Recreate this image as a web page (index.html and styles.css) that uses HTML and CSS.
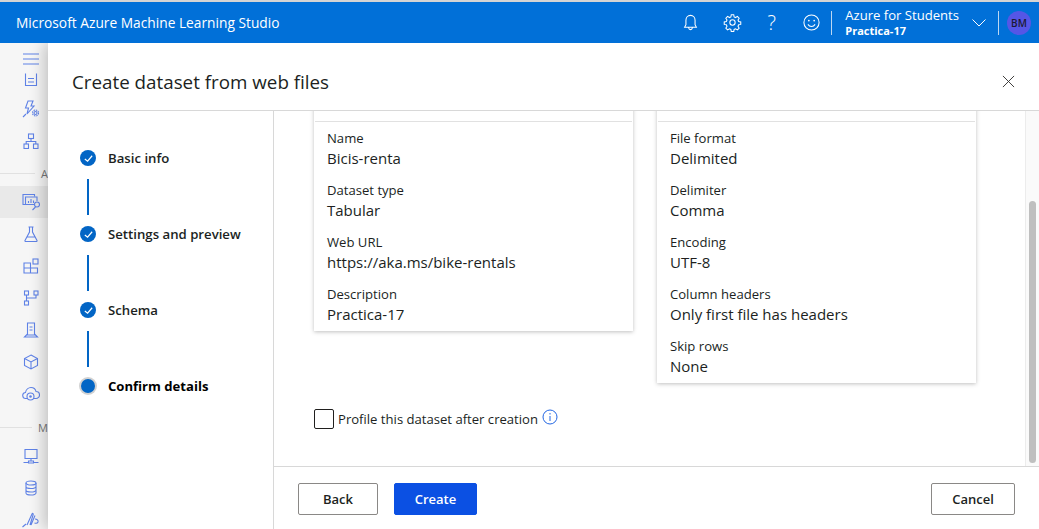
FILE: index.html
```html
<!DOCTYPE html>
<html lang="en">
<head>
    <meta charset="UTF-8">
    <title>Create dataset from web files</title>
    <link rel="stylesheet" href="styles.css">
</head>
<body>

<header class="topbar">
    <div class="brand">Microsoft Azure Machine Learning Studio</div>
    <div class="top-icons">
        <svg class="top-icon" viewBox="0 0 20 20"><path d="M10 2.500c-3 0-4.800 2.200-4.800 5v4.800L3.800 15h12.400l-1.400-2.700V7.500c0-2.800-1.800-5-4.800-5zM8 15.500c.2 1.300 1 2 2 2s1.800-.7 2-2"/></svg>
        <svg class="top-icon top-gear" viewBox="0 0 20 20"><circle cx="10" cy="10" r="2.800"/><path d="M8.700 1.800h2.600l.4 2.300 1.500.7 2-1.200 1.800 1.900-1.200 1.900.7 1.600 2.200.4v2.600l-2.200.4-.7 1.600 1.200 1.900-1.800 1.900-2-1.200-1.500.7-.4 2.300H8.700l-.4-2.300-1.500-.7-2 1.200-1.800-1.900 1.200-1.900-.7-1.600-2.200-.4V9.400l2.200-.4.7-1.600-1.200-1.900 1.800-1.900 2 1.200 1.500-.7z"/></svg>
        <span class="top-help">?</span>
        <svg class="top-icon" viewBox="0 0 20 20"><circle cx="10" cy="10" r="8"/><circle class="solid" cx="7.200" cy="8" r=".9"/><circle class="solid" cx="12.800" cy="8" r=".9"/><path d="M6.200 12c1 1.500 2.300 2.200 3.800 2.200s2.800-.7 3.800-2.200"/></svg>
    </div>
    <div class="top-sep"></div>
    <div class="account">
        <div class="account-name">Azure for Students</div>
        <div class="account-ws">Practica-17</div>
    </div>
    <svg class="chevron" viewBox="0 0 14 8"><path d="M.5.500 7 7l6.500-6.500"/></svg>
    <div class="top-sep"></div>
    <div class="avatar">BM</div>
</header>

<div class="main">
    <nav class="sidebar">
        <div class="nav-item nav-burger"><svg viewBox="0 0 16 12"><path d="M0 1h16M0 6h16M0 11h16"/></svg></div>
        <div class="nav-item nav-short"><svg viewBox="0 0 16 16"><path d="M2.500 1.500v12h11v-12M5 6.500h6M5 10h6"/></svg></div>
        <div class="nav-item nav-large"><svg viewBox="0 0 18 18"><path d="M6 1h5L9 6h3l-7 8 1.500-6H3.500zM1 17l3-3"/><circle cx="13.500" cy="13" r="1.500"/><circle cx="13.500" cy="13" r="3" stroke-dasharray="1.500 .85"/></svg></div>
        <div class="nav-item"><svg viewBox="0 0 16 16"><rect x="5.500" y="1" width="5" height="4.500"/><rect x="1" y="11" width="4.500" height="4.500"/><rect x="10.500" y="11" width="4.500" height="4.500"/><path d="M8 5.500V8M3.200 11V8.500h9.600V11"/></svg></div>
        <div class="nav-divider"><span>A</span></div>
        <div class="nav-item nav-active nav-large"><svg viewBox="0 0 18 18"><path d="M3 11.500H1V1.500h11.500v2"/><path d="M13 11.500H3.500V4H15v4"/><path d="M6.500 10V8M9 10V6M11.500 10V7.500M10.500 17l3-3"/><circle cx="15" cy="11.500" r="2.500"/></svg></div>
        <div class="nav-item"><svg viewBox="0 0 16 16"><path d="M5.500 1h5M6.500 1v5L2 14.500c-.2.500 0 1 .7 1h10.600c.7 0 .9-.5.7-1L9.500 6V1M4 11h8"/></svg></div>
        <div class="nav-item"><svg viewBox="0 0 16 16"><path d="M1 5h6.500v10H1zM1 10h13.500v5H7.500V5"/><rect x="10" y="1" width="5" height="5"/></svg></div>
        <div class="nav-item"><svg viewBox="0 0 16 16"><rect x="1.500" y="1" width="4" height="4"/><rect x="11" y="1" width="4" height="4"/><rect x="1.500" y="11" width="4" height="4"/><path d="M3.500 5v6M3.500 8H13V5"/></svg></div>
        <div class="nav-item"><svg viewBox="0 0 16 16"><path d="M4.500 1h7v12h-7zM6.500 5h3M6.500 8h3M4.500 12 1.500 15h13l-3-3"/></svg></div>
        <div class="nav-item"><svg viewBox="0 0 16 16"><path d="M8 1l6.500 3.500v7L8 15l-6.500-3.500v-7zM1.500 4.500 8 8l6.500-3.500M8 8v7"/></svg></div>
        <div class="nav-item nav-large"><svg viewBox="0 0 18 16"><path d="M5 12.500H4a3 3 0 0 1-.5-6C4 3.500 6.500 1.500 9 1.500c2.500 0 4.500 1.700 5 4a3.500 3.500 0 0 1 0 7h-2"/><circle cx="8.500" cy="10.500" r="3.500"/><circle class="solid" cx="8.500" cy="10.500" r="1.300"/></svg></div>
        <div class="nav-divider nav-divider-low"><span>M</span></div>
        <div class="nav-item nav-gap"><svg viewBox="0 0 16 16"><path d="M2 1.500h12v9H2zM8 10.500V13M.5 14.500h5M10.500 14.500h5M5.500 13h5v2h-5z"/></svg></div>
        <div class="nav-item"><svg viewBox="0 0 16 16"><ellipse cx="8" cy="3" rx="5" ry="2"/><path d="M3 3v10c0 1.100 2.200 2 5 2s5-.9 5-2V3M3 6.500c0 1.100 2.200 2 5 2s5-.9 5-2M3 10c0 1.100 2.200 2 5 2s5-.9 5-2"/></svg></div>
        <div class="nav-item nav-large"><svg viewBox="0 0 18 16"><path d="M.5 15 4 12M5 13 10 2c.5-1 1.500-.5 1.200.5L8 13M9 13 13 3.500M13 7c2 0 3.500 1.500 3 3-.4 1-2 1.500-3.500 1"/></svg></div>
    </nav>

    <section class="dialog">
        <div class="dialog-head">
            <h1>Create dataset from web files</h1>
            <svg class="close" viewBox="0 0 14 14"><path d="M1 1l12 12M13 1 1 13"/></svg>
        </div>
        <div class="dialog-body">
            <ol class="steps">
                <li class="step">
                    <span class="step-dot"><svg viewBox="0 0 12 12"><path d="M2 6.500 5 9l5-6"/></svg></span>
                    Basic info
                </li>
                <li class="step-line"></li>
                <li class="step">
                    <span class="step-dot"><svg viewBox="0 0 12 12"><path d="M2 6.500 5 9l5-6"/></svg></span>
                    Settings and preview
                </li>
                <li class="step-line"></li>
                <li class="step">
                    <span class="step-dot"><svg viewBox="0 0 12 12"><path d="M2 6.500 5 9l5-6"/></svg></span>
                    Schema
                </li>
                <li class="step-line"></li>
                <li class="step step-current">
                    <span class="step-dot"></span>
                    Confirm details
                </li>
            </ol>
            <div class="content">
                <div class="scroll-area">
                    <div class="scrolled">
                        <div class="cards">
                            <div class="card">
                                <h3>Basic info</h3>
                                <div class="field"><div class="field-label">Name</div><div class="field-value">Bicis-renta</div></div>
                                <div class="field"><div class="field-label">Dataset type</div><div class="field-value">Tabular</div></div>
                                <div class="field"><div class="field-label">Web URL</div><div class="field-value">https://aka.ms/bike-rentals</div></div>
                                <div class="field"><div class="field-label">Description</div><div class="field-value">Practica-17</div></div>
                            </div>
                            <div class="card">
                                <h3>File settings</h3>
                                <div class="field"><div class="field-label">File format</div><div class="field-value">Delimited</div></div>
                                <div class="field"><div class="field-label">Delimiter</div><div class="field-value">Comma</div></div>
                                <div class="field"><div class="field-label">Encoding</div><div class="field-value">UTF-8</div></div>
                                <div class="field"><div class="field-label">Column headers</div><div class="field-value">Only first file has headers</div></div>
                                <div class="field"><div class="field-label">Skip rows</div><div class="field-value">None</div></div>
                            </div>
                        </div>
                        <label class="profile">
                            <span class="checkbox"></span>
                            Profile this dataset after creation
                            <svg class="info" viewBox="0 0 16 16"><circle cx="8" cy="8" r="7"/><path d="M8 7v5M8 4v1.500"/></svg>
                        </label>
                    </div>
                    <div class="scrollbar"><div class="thumb"></div></div>
                </div>
                <div class="footer">
                    <button class="btn">Back</button>
                    <button class="btn btn-primary">Create</button>
                    <button class="btn btn-cancel">Cancel</button>
                </div>
            </div>
        </div>
    </section>
</div>

</body>
</html>
```

FILE: styles.css
```css
html, body {
    height: 100%;
}
body {
    margin: 0;
    height: 529px;
    overflow: hidden;
    display: flex;
    flex-direction: column;
    font-family: "Open Sans", "Noto Sans", sans-serif;
    color: #201f1e;
    background: #fff;
    border-top: 2px solid #d4d4d4;
    box-sizing: border-box;
}

/* top bar */
.topbar {
    position: relative;
    z-index: 1;
    flex: none;
    height: 41px;
    display: flex;
    align-items: center;
    background: #0170d8;
    color: #fff;
    padding: 0 8px 0 16px;
}
.brand {
    font-size: 13.750px;
    flex: 1;
}
.top-icons {
    display: flex;
    align-items: center;
    gap: 21px;
    margin-right: 10px;
}
.top-icon {
    width: 19px;
    height: 19px;
    fill: none;
    stroke: #fff;
    stroke-width: 1.100;
}
.top-icon .solid {
    fill: #fff;
    stroke: none;
}
.top-gear {
    margin-left: 2px;
}
.top-help {
    width: 19px;
    margin-left: -1px;
    text-align: center;
    font-size: 20px;
    font-weight: 300;
    line-height: 19px;
}
.top-sep {
    width: 1px;
    height: 24px;
    background: #bcd7f2;
}
.account {
    margin-left: 13px;
    line-height: 16px;
}
.account-name {
    font-size: 13.100px;
}
.account-ws {
    font-size: 11px;
    font-weight: 700;
}
.chevron {
    width: 14px;
    height: 8px;
    margin: 0 12px 0 13px;
    fill: none;
    stroke: #fff;
}
.avatar {
    width: 24px;
    height: 24px;
    margin-left: 8px;
    border-radius: 50%;
    background: #5556e6;
    color: #1b1a33;
    font-size: 10px;
    font-weight: 600;
    line-height: 24px;
    text-align: center;
}

/* main row */
.main {
    flex: 1;
    display: flex;
    min-height: 0;
}
.sidebar {
    flex: none;
    width: 48px;
    background: #f6f6f6;
    overflow: hidden;
}
.nav-item {
    height: 32px;
    display: flex;
    align-items: center;
    justify-content: center;
    padding-left: 14px;
}
.nav-item svg {
    width: 16px;
    height: 16px;
    fill: none;
    stroke: #5f82e6;
    stroke-width: 1.100;
}
.nav-item svg .solid {
    fill: #5f82e6;
    stroke: none;
}
.nav-item.nav-large svg {
    width: 18px;
    height: 18px;
}
.nav-burger {
    height: 32px;
}
.nav-short {
    height: 26px;
    margin-top: -8px;
}
.nav-divider {
    height: 16px;
    margin: 8px 0 5px;
    display: flex;
    align-items: center;
    font-size: 11px;
    color: #777;
}
.nav-divider::before {
    content: "";
    width: 35px;
    height: 1px;
    margin-right: 6px;
    background: #e1e1e1;
}
.nav-divider-low {
    margin-top: 9px;
}
.nav-active {
    background: #e9e9e9;
}
.nav-gap {
    margin-top: 5px;
}

/* dialog */
.dialog {
    flex: 1;
    min-width: 0;
    display: flex;
    flex-direction: column;
    background: #fff;
    box-shadow: -4px 0 14px rgba(0, 0, 0, 0.22);
}
.dialog-head {
    flex: none;
    height: 68px;
    display: flex;
    align-items: center;
    justify-content: space-between;
    padding: 10px 24px 0;
    border-bottom: 1px solid #d8d8d8;
    box-sizing: border-box;
}
.dialog-head h1 {
    margin: 0;
    font-size: 18.800px;
    font-weight: 400;
}
.close {
    width: 13px;
    height: 13px;
    fill: none;
    stroke: #323130;
}
.dialog-body {
    flex: 1;
    display: flex;
    min-height: 0;
}

/* stepper */
.steps {
    flex: none;
    width: 226px;
    margin: 0;
    padding: 37px 0 0 32px;
    list-style: none;
    border-right: 1px solid #d8d8d8;
    box-sizing: border-box;
}
.step {
    height: 20px;
    display: flex;
    align-items: center;
    gap: 12px;
    font-size: 13.200px;
    font-weight: 600;
}
.step-dot {
    width: 16px;
    height: 16px;
    border-radius: 50%;
    background: #0265c5;
    display: flex;
    align-items: center;
    justify-content: center;
}
.step-dot svg {
    width: 11px;
    height: 11px;
    fill: none;
    stroke: #fff;
    stroke-width: 1.300;
}
.step-line {
    width: 2px;
    height: 36px;
    margin: 11px 0 9px 7px;
    background: #0265c5;
}
.step-current {
    color: #000;
    font-size: 13.100px;
    font-weight: 700;
}
.step-current .step-dot {
    box-shadow: 0 0 0 2px #d2d2d2;
    width: 14px;
    height: 14px;
    margin: 0 1px;
}

/* content */
.content {
    flex: 1;
    min-width: 0;
    display: flex;
    flex-direction: column;
}
.scroll-area {
    flex: 1;
    display: flex;
    min-height: 0;
    overflow: hidden;
}
.scrolled {
    flex: 1;
    min-width: 0;
    padding-left: 40px;
    margin-top: -26px;
}
.scrollbar {
    flex: none;
    width: 14px;
    box-sizing: border-box;
    padding: 90px 3px 0 3px;
    border-left: 1px solid #ececec;
    background: #fafafa;
}
.thumb {
    height: 262px;
    border-radius: 4px;
    background: #bfbfbf;
}
.cards {
    display: flex;
    align-items: flex-start;
    gap: 24px;
}
.card {
    width: 319px;
    box-sizing: border-box;
    padding: 0 13px;
    background: #fff;
    box-shadow: 0 1px 4px rgba(0, 0, 0, 0.25);
}
.card h3 {
    margin: 0 -12px 6px;
    padding: 0 12px;
    height: 37px;
    line-height: 24px;
    font-size: 13px;
    font-weight: 600;
    border-bottom: 1px solid #e1e1e1;
    box-sizing: border-box;
}
.field {
    height: 52px;
}
.field:last-child {
    height: 47px;
}
.field-label {
    font-size: 13.100px;
    line-height: 20px;
}
.field-value {
    font-size: 15px;
    line-height: 20px;
}
.profile {
    display: flex;
    align-items: center;
    margin-top: 26px;
    font-size: 13.100px;
}
.checkbox {
    width: 20px;
    height: 20px;
    margin-right: 4px;
    border: 1px solid #201f1e;
    border-radius: 2px;
    box-sizing: border-box;
}
.info {
    width: 16px;
    height: 16px;
    margin: -4px 0 0 4px;
    fill: none;
    stroke: #2266e3;
}

/* footer */
.footer {
    flex: none;
    height: 63px;
    display: flex;
    align-items: flex-start;
    gap: 16px;
    padding: 16px 24px 0;
    border-top: 1px solid #d8d8d8;
    box-sizing: border-box;
}
.btn {
    width: 80px;
    height: 32px;
    border: 1px solid #8a8886;
    border-radius: 2px;
    background: #fff;
    color: #201f1e;
    font-family: inherit;
    font-size: 13px;
    font-weight: 600;
    padding: 0;
}
.btn-primary {
    width: 83px;
    border-color: #0b50e3;
    background: #0b50e3;
    color: #fff;
}
.btn-cancel {
    width: 84px;
    margin-left: auto;
}
```
